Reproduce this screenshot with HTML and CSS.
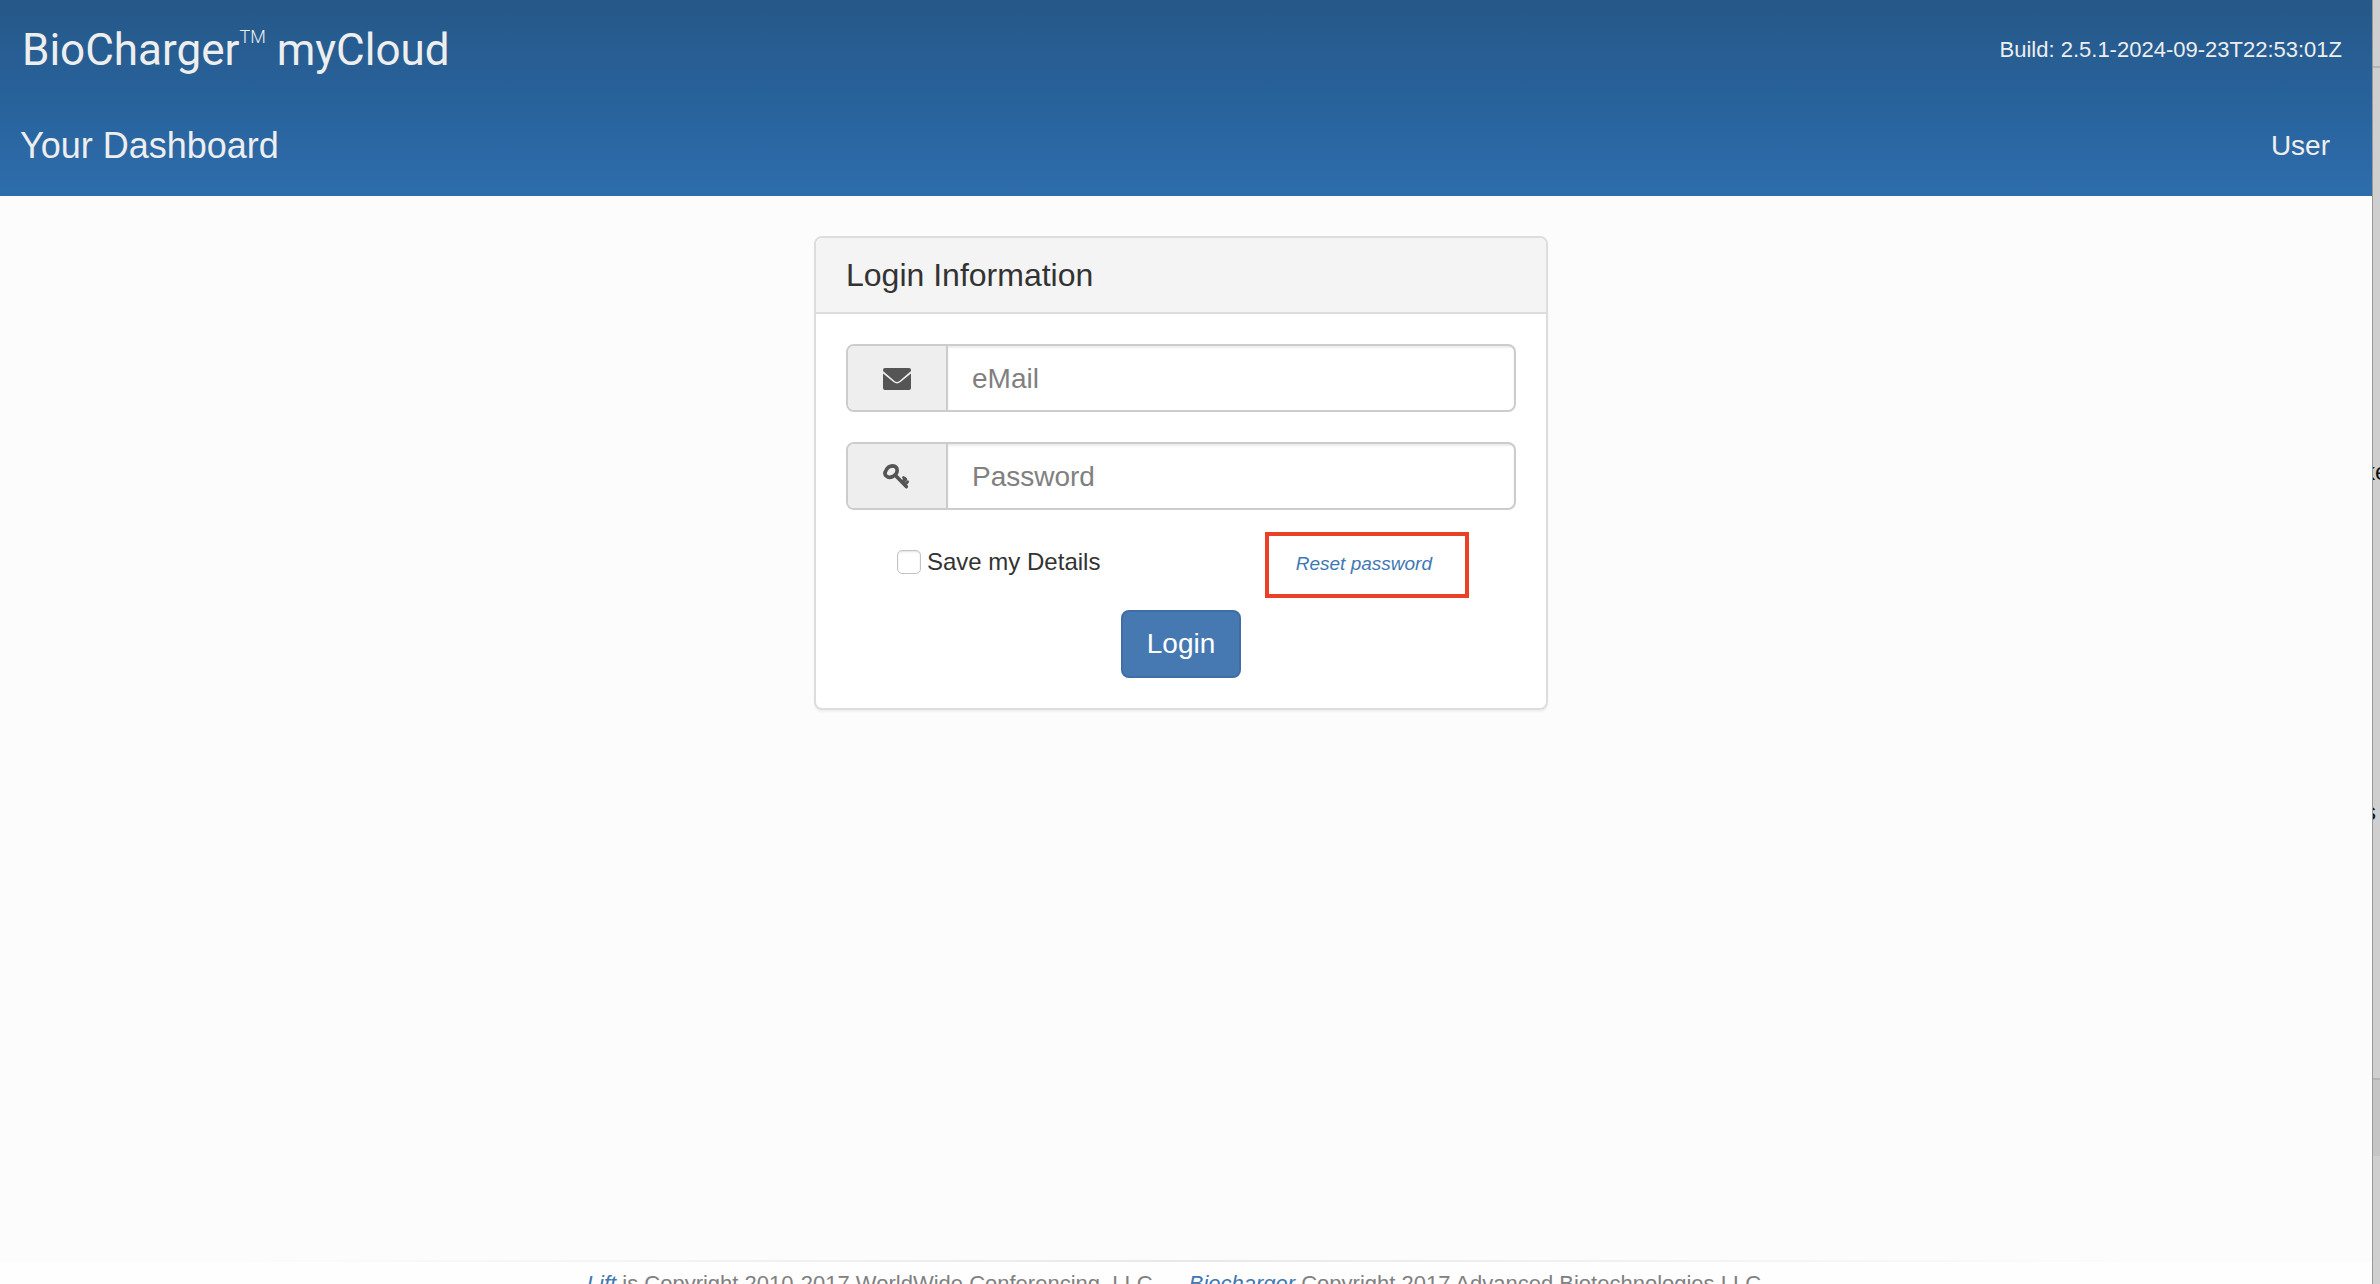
FILE: index.html
```html
<!DOCTYPE html>
<html lang="en">
<head>
<meta charset="utf-8">
<title>BioCharger myCloud</title>
<link rel="stylesheet" href="styles.css">
</head>
<body>
<div class="desktop">
  <div class="page">
    <header class="header">
      <div class="header-row">
        <div class="brand">BioCharger<sup class="tm">TM</sup> myCloud</div>
        <div class="build">Build: 2.5.1-2024-09-23T22:53:01Z</div>
      </div>
      <nav class="header-row nav-row">
        <a class="nav-title" href="#">Your Dashboard</a>
        <a class="nav-user" href="#">User</a>
      </nav>
    </header>
    <main class="main">
      <section class="panel">
        <h1 class="panel-heading">Login Information</h1>
        <form class="panel-body">
          <div class="input-group">
            <label class="addon" for="email" aria-label="eMail">
              <svg class="icon" viewBox="0 0 28 28" aria-hidden="true"><path fill="currentColor" d="M2 3h24q2 0 2 2v1L16.500 16Q14 18 11.500 16L0 6V5Q0 3 2 3zM0 8.500L10.500 17Q14 19.800 17.500 17L28 8.500V23q0 2-2 2H2q-2 0-2-2z"/></svg>
            </label>
            <input class="field" id="email" type="email" placeholder="eMail">
          </div>
          <div class="input-group">
            <label class="addon" for="password" aria-label="Password">
              <svg class="icon" viewBox="0 0 28 28" fill="none" stroke="currentColor" stroke-linecap="round" aria-hidden="true"><path stroke-width="3.600" d="M3 7.500Q5 3 9.500 2.900Q14 3 14.200 7.500Q14 11.500 10 13.300Q6 15.500 3.300 13Q.8 10.800 3 7.500z"/><path stroke-width="3.600" d="M12.500 12.500L23.300 23.600M19.400 19.200L22.400 16.200"/><path stroke-width="2.800" d="M22 21.400L24.700 18.700M20.500 14.500L22.400 16.400"/></svg>
            </label>
            <input class="field" id="password" type="password" placeholder="Password">
          </div>
          <div class="options">
            <label class="save"><input class="check" type="checkbox">Save my Details</label>
            <div class="highlight"><a class="reset" href="#">Reset password</a></div>
          </div>
          <button class="login" type="button">Login</button>
        </form>
      </section>
    </main>
    <footer class="footer">
      <span><a class="footer-link" href="#">Lift</a> is Copyright 2010-2017 WorldWide Conferencing, LLC.</span>
      <span><a class="footer-link" href="#">Biocharger</a> Copyright 2017 Advanced Biotechnologies LLC.</span>
    </footer>
  </div>
  <aside class="behind">
    <span class="behind-text behind-upper">ke</span>
    <span class="behind-text behind-lower">s</span>
    <div class="behind-top"></div>
    <div class="behind-middle"></div>
    <div class="behind-band"></div>
    <div class="behind-bottom"></div>
  </aside>
</div>
</body>
</html>
```
FILE: styles.css
```css
* { box-sizing: border-box; }

body {
  margin: 0;
  color: #333;
  font: 24px/32px "Liberation Sans", Arial, sans-serif;
}

a { text-decoration: none; }

.desktop {
  display: flex;
  height: 100vh;
  overflow: hidden;
}

.page {
  flex: 1;
  min-width: 0;
  background: #fcfcfc;
}

.header {
  padding: 0 30px 0 20px;
  background: linear-gradient(#265888, #28639d 55%, #2e6dac);
  color: #eee;
}

.header-row {
  display: flex;
  align-items: center;
  justify-content: space-between;
  height: 100px;
}

.brand {
  padding-left: 2px;
  font: 44px/48px Roboto, sans-serif;
}

.tm {
  font-size: 18px;
  line-height: 18px;
  vertical-align: 22px;
  font-weight: 300;
}

.build { font-size: 22px; }

.nav-row {
  height: 96px;
  padding: 0 12px 4px 0;
}

.nav-title,
.nav-user { color: #eee; }

.nav-title { font-size: 36px; }

.nav-user { font-size: 28px; }

.main {
  min-height: calc(100vh - 220px);
  padding: 40px 10px 40px 0;
}

.panel {
  max-width: 734px;
  margin: 0 auto;
  border: 2px solid #ddd;
  border-radius: 8px;
  background: #fff;
  box-shadow: 0 2px 2px rgba(0, 0, 0, .05);
}

.panel-heading {
  margin: 0;
  padding: 18px 30px;
  border-bottom: 2px solid #ddd;
  border-radius: 6px 6px 0 0;
  background: #f4f4f4;
  font-size: 32px;
  font-weight: 400;
  line-height: 38px;
}

.panel-body {
  display: flex;
  flex-direction: column;
  padding: 30px;
}

.input-group {
  display: flex;
  height: 68px;
  margin-bottom: 30px;
  border: 2px solid #ccc;
  border-radius: 8px;
  background: #fff;
  overflow: hidden;
}

.addon {
  display: flex;
  align-items: center;
  justify-content: center;
  width: 100px;
  padding-top: 2px;
  border-right: 2px solid #ccc;
  background: #eee;
  color: #555;
}

.icon {
  width: 28px;
  height: 28px;
}

.field {
  flex: 1;
  min-width: 0;
  padding: 2px 24px 0;
  border: 0;
  background: transparent;
  box-shadow: inset 0 2px 2px rgba(0, 0, 0, .075);
  color: #555;
  font: 28px/36px "Liberation Sans", Arial, sans-serif;
}

.field::placeholder { color: #808080; }

.options {
  display: flex;
  align-items: center;
  justify-content: space-between;
  margin-top: -8px;
  padding: 0 47px 0 51px;
}

.save {
  display: flex;
  align-items: center;
  gap: 6px;
  padding-bottom: 6px;
}

.check {
  appearance: none;
  width: 24px;
  height: 24px;
  margin: 0;
  border: 1px solid #c4c4c4;
  border-radius: 5px;
  background: #fff;
  box-shadow: inset 0 1px 2px rgba(0, 0, 0, .12);
}

.highlight {
  padding: 14px 33px 16px 27px;
  border: 4px solid #ea4126;
}

.reset {
  display: block;
  color: #4078b4;
  font-size: 19px;
  font-style: italic;
  line-height: 28px;
}

.login {
  align-self: center;
  height: 68px;
  margin-top: 12px;
  padding: 0 24px;
  border: 2px solid #3f6da5;
  border-radius: 8px;
  background: #4679b2;
  color: #fff;
  font: 28px/36px "Liberation Sans", Arial, sans-serif;
}

.footer {
  display: flex;
  justify-content: center;
  gap: 30px;
  padding: 6px 18px 10px 0;
  border-top: 2px solid;
  border-image: linear-gradient(90deg, #fcfcfc 10%, #e8e8e8 50%, #fcfcfc 90%) 1;
  background: #fefefe;
  color: #808080;
  font-size: 22px;
}

.footer-link {
  color: #4078b4;
  font-style: italic;
}

/* Strip of the window behind this one */
.behind {
  position: relative;
  display: flex;
  flex-direction: column;
  width: 8px;
  border-left: 1px solid #999;
  background: #cfcfcf;
  overflow: hidden;
}

.behind-top { flex: 66; }

.behind-middle {
  flex: 1012;
  border-top: 2px solid #b4b4b4;
  border-bottom: 2px solid #b4b4b4;
}

.behind-band {
  flex: 76;
  background: #c5c5c5;
}

.behind-bottom { flex: 128; }

.behind-text {
  position: absolute;
  color: #111;
}

.behind-upper {
  top: 456px;
  left: -10px;
}

.behind-lower {
  top: 796px;
  left: -9px;
}
```
